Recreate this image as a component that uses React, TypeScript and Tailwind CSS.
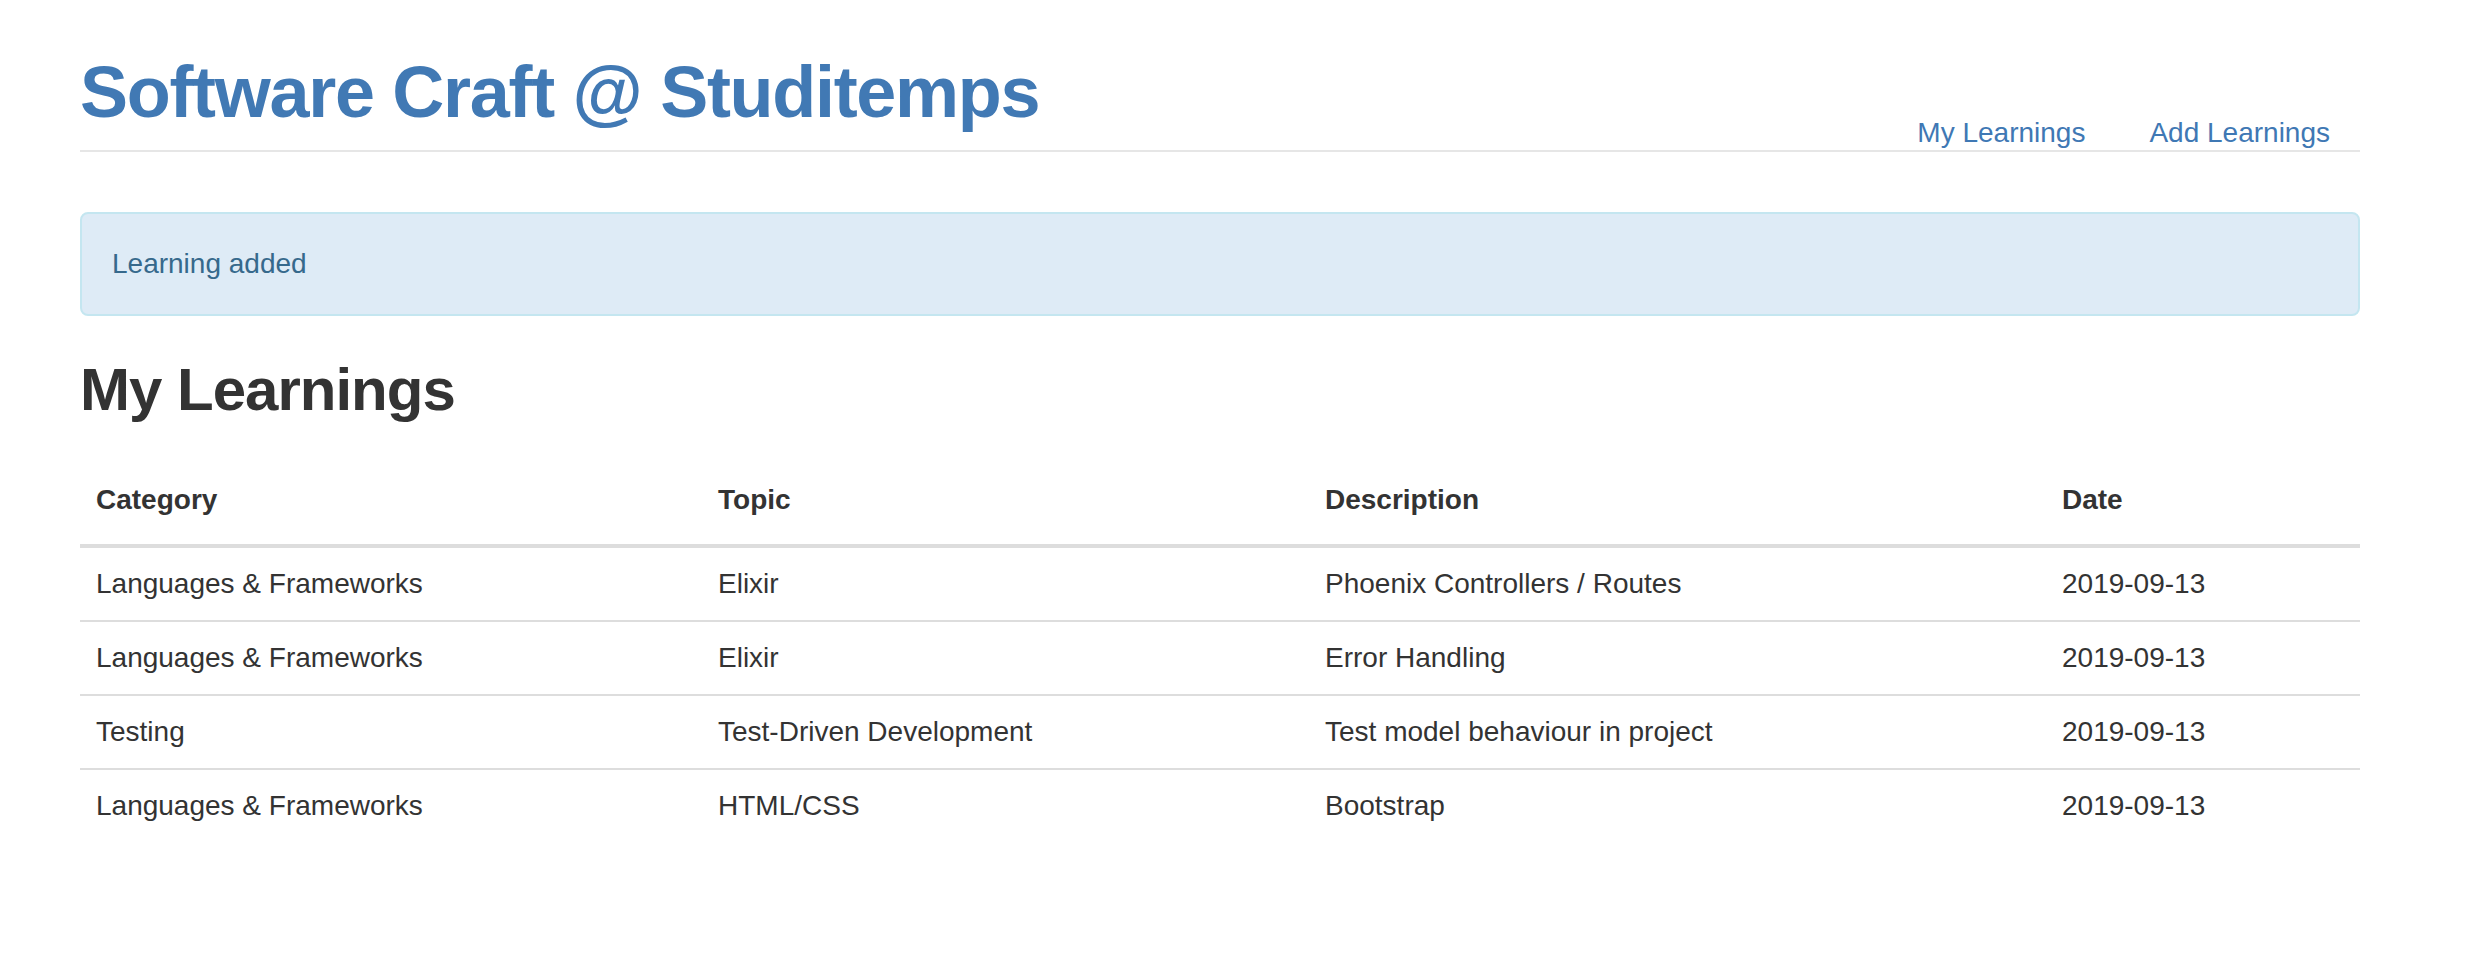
const rows = [
  { category: "Languages & Frameworks", topic: "Elixir", description: "Phoenix Controllers / Routes", date: "2019-09-13" },
  { category: "Languages & Frameworks", topic: "Elixir", description: "Error Handling", date: "2019-09-13" },
  { category: "Testing", topic: "Test-Driven Development", description: "Test model behaviour in project", date: "2019-09-13" },
  { category: "Languages & Frameworks", topic: "HTML/CSS", description: "Bootstrap", date: "2019-09-13" },
];

const cols = "grid grid-cols-[622px_607px_737px_314px]";

export default function App() {
  return (
    <div className="min-h-[968px] w-full bg-white font-['Liberation_Sans',Arial,sans-serif] text-[#333333]">
      <div className="ml-[80px] w-[2280px]">
        <header className="flex items-end justify-between border-b-2 border-[#e6e6e6] pt-[53px]">
          <h1 className="mb-[18px] text-[72px] font-bold leading-[79px] tracking-[-1.3px] text-[#4179b4]">Software Craft @ Studitemps</h1>
          <nav className="flex gap-[4px]">
            <a href="#" className="px-[30px] text-[28px] leading-[34px] text-[#3f78b4]">My Learnings</a>
            <a href="#" className="px-[30px] text-[28px] leading-[34px] text-[#3f78b4]">Add Learnings</a>
          </nav>
        </header>

        <div className="mt-[60px] rounded-[8px] border-2 border-[#c4e6f0] bg-[#deebf6] p-[30px] text-[28px] leading-[40px] text-[#36698c]">
          Learning added
        </div>

        <h2 className="mt-[41px] text-[60px] font-bold leading-[66px] tracking-[-1px] text-[#333333]">My Learnings</h2>

        <div className="mt-[41px] text-[28px] leading-[40px]">
          <div className={`${cols} border-b-4 border-[#dddddd] font-bold`}>
            <div className="px-[16px] pb-[24px] pt-[16px]">Category</div>
            <div className="px-[16px] pb-[24px] pt-[16px]">Topic</div>
            <div className="px-[16px] pb-[24px] pt-[16px]">Description</div>
            <div className="px-[16px] pb-[24px] pt-[16px]">Date</div>
          </div>
          {rows.map((r, i) => (
            <div key={i} className={`${cols} ${i < rows.length - 1 ? "border-b-2 border-[#dddddd]" : ""}`}>
              <div className="px-[16px] py-[16px]">{r.category}</div>
              <div className="px-[16px] py-[16px]">{r.topic}</div>
              <div className="px-[16px] py-[16px]">{r.description}</div>
              <div className="px-[16px] py-[16px]">{r.date}</div>
            </div>
          ))}
        </div>
      </div>
    </div>
  );
}
